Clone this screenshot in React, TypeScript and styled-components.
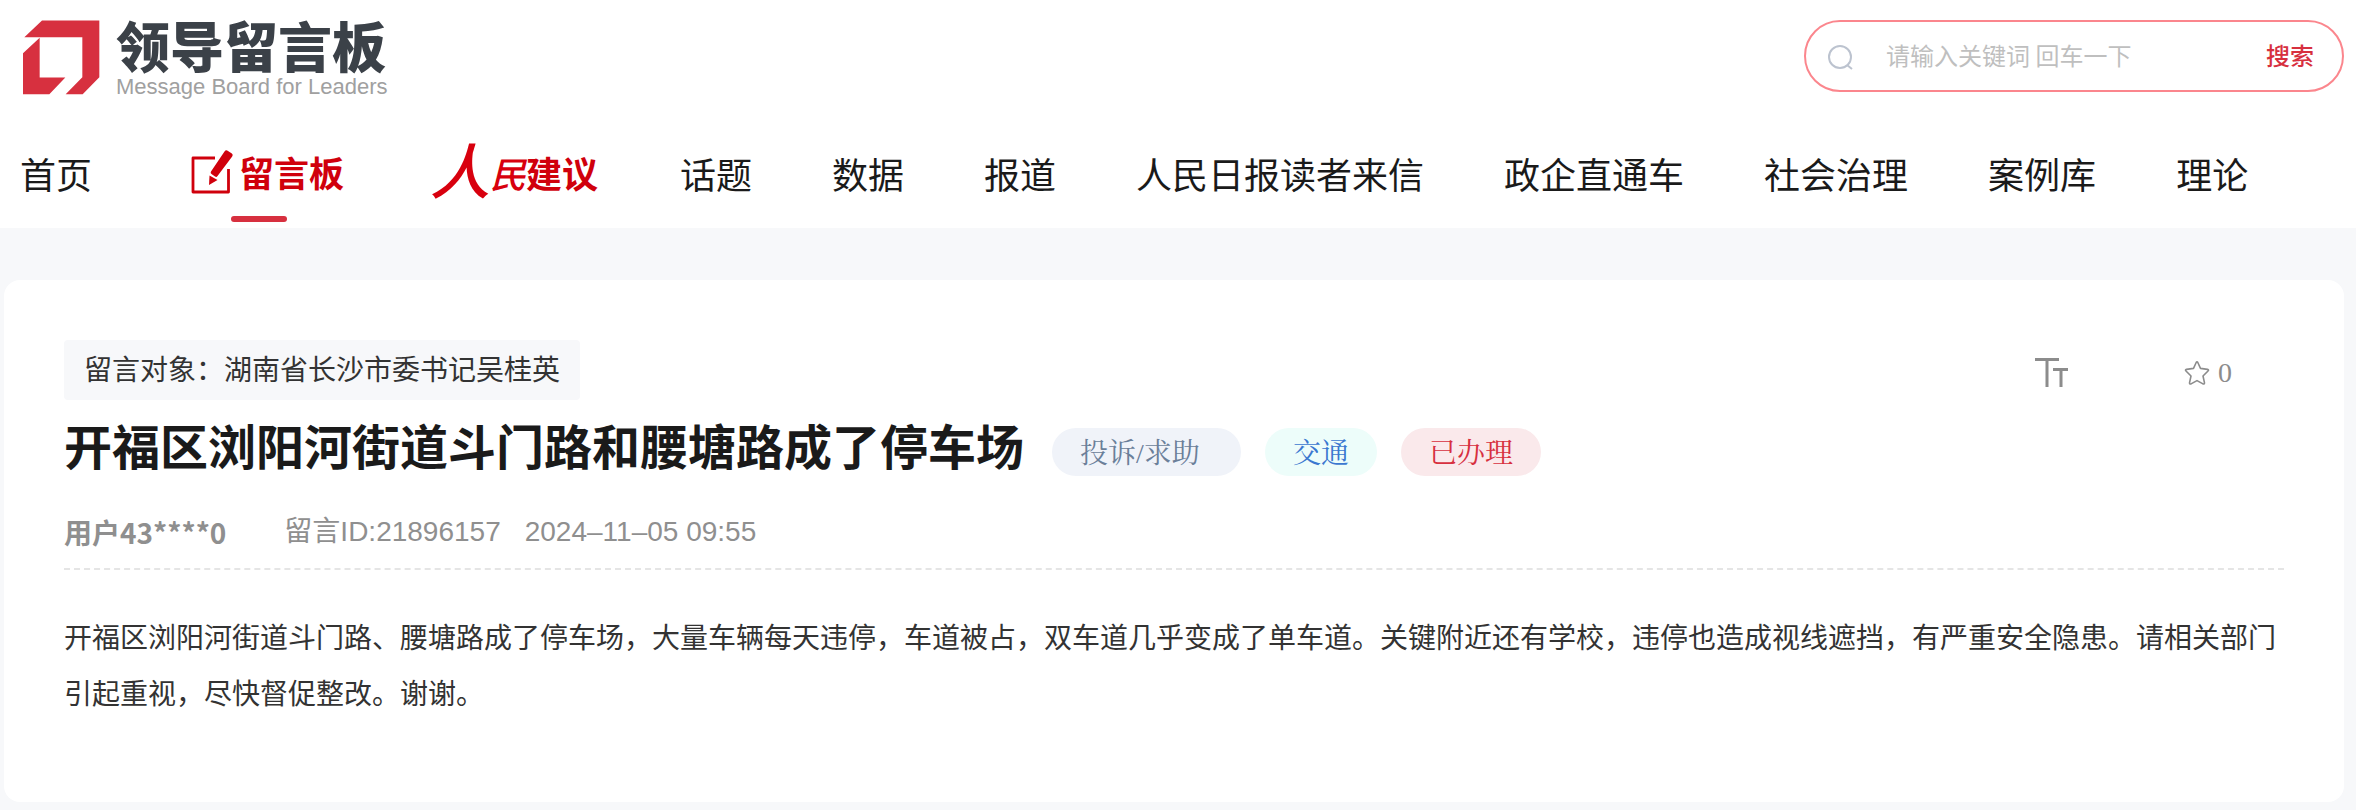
import React from "react";
import styled, { createGlobalStyle, css } from "styled-components";

const sans = `"Noto Sans CJK SC", "Liberation Sans", sans-serif`;
const latinSans = `"Liberation Sans", "Noto Sans CJK SC", sans-serif`;
const serif = `"Liberation Serif", "Noto Serif CJK SC", "Noto Sans CJK SC", serif`;

const GlobalStyle = createGlobalStyle`
  *, *::before, *::after { box-sizing: border-box; }
  body {
    margin: 0;
    background: #f7f8fa;
    color: #1a1a1a;
    font-family: ${sans};
  }
  button, input { font-family: inherit; }
`;

const Header = styled.header`
  background: #fff;
  padding: 20px 12px 0 20px;
`;

const TopBar = styled.div`
  display: flex;
  align-items: flex-start;
  justify-content: space-between;
  height: 102px;
`;

const Logo = styled.a`
  display: flex;
  gap: 16px;
  padding-left: 3px;
  text-decoration: none;
  white-space: nowrap;
`;

const LogoWords = styled.span`
  display: flex;
  flex-direction: column;
  gap: 4px;
`;

const LogoName = styled.span`
  font-size: 54px;
  font-weight: 900;
  line-height: 50px;
  color: #3b4148;
`;

const LogoSub = styled.span`
  font-family: ${latinSans};
  font-size: 22px;
  line-height: 26px;
  color: #a0a0a0;
`;

const Search = styled.form`
  display: flex;
  align-items: center;
  width: 540px;
  height: 72px;
  padding: 0 28px 0 20px;
  border: 2px solid #fb868d;
  border-radius: 36px;
  background: #fff;
`;

const SearchInput = styled.input`
  flex: 1;
  min-width: 0;
  margin-left: 32px;
  padding: 0 0 2px;
  border: 0;
  outline: 0;
  background: transparent;
  font-size: 24px;
  line-height: 36px;
  color: #333;
  &::placeholder {
    color: #bfbfbf;
    opacity: 1;
  }
`;

const SearchButton = styled.button`
  padding: 0 0 2px;
  border: 0;
  background: none;
  font-size: 24px;
  font-weight: 500;
  line-height: 36px;
  color: #d7303f;
  cursor: pointer;
`;

const Nav = styled.nav`
  display: flex;
  gap: 80px;
  height: 106px;
`;

const NavLink = styled.a<{ $art?: boolean; $active?: boolean }>`
  position: relative;
  display: flex;
  align-items: center;
  justify-content: center;
  flex: none;
  padding-bottom: 4px;
  font-size: 36px;
  line-height: 54px;
  color: #1a1a1a;
  text-decoration: none;
  white-space: nowrap;
  ${(p) =>
    p.$art &&
    css`
      width: 174px;
      padding-right: 2px;
      padding-bottom: 6px;
      justify-content: flex-end;
      font-weight: 700;
      color: #d0000c;
    `}
  ${(p) =>
    p.$active &&
    css`
      &::after {
        content: "";
        position: absolute;
        bottom: 6px;
        left: 50%;
        width: 56px;
        height: 6px;
        margin-left: -28px;
        border-radius: 3px;
        background: #d7303f;
      }
    `}
`;

const BoardWord = styled.span`
  padding-left: 4px;
  font-size: 35px;
`;

const Brush = styled.span<{ $large?: boolean }>`
  padding-bottom: ${(p) => (p.$large ? "8px" : "0")};
  font-size: ${(p) => (p.$large ? "60px" : "36px")};
  font-style: italic;
  font-weight: 500;
  color: #d8000e;
`;

const Card = styled.main`
  margin: 52px 12px 8px 4px;
  padding: 60px 60px 80px;
  border-radius: 16px;
  background: #fff;
`;

const CardTop = styled.div`
  display: flex;
  align-items: center;
  justify-content: space-between;
`;

const Target = styled.div`
  padding: 8px 20px 12px;
  border-radius: 4px;
  background: #f7f8fa;
  font-size: 28px;
  line-height: 40px;
  color: #333;
`;

const Tools = styled.div`
  display: flex;
  align-items: center;
  gap: 115px;
  padding-right: 52px;
`;

const ToolButton = styled.button`
  display: flex;
  align-items: center;
  gap: 8px;
  padding: 6px 0 0;
  border: 0;
  background: none;
  font-family: ${serif};
  font-size: 28px;
  line-height: 32px;
  color: #8c8c8c;
  cursor: pointer;
`;

const TitleRow = styled.div`
  display: flex;
  align-items: flex-end;
  margin-top: 10px;
`;

const Title = styled.h1`
  margin: 0 28px 0 0;
  padding-bottom: 2px;
  font-size: 48px;
  font-weight: 700;
  line-height: 68px;
`;

const Tags = styled.div`
  display: flex;
  gap: 24px;
  padding-bottom: 4px;
`;

const tones = {
  slate: { bg: "#f0f3f9", fg: "#6b7f99" },
  mint: { bg: "#edfdfa", fg: "#3b78d0" },
  rose: { bg: "#fae9eb", fg: "#d7303f" },
};

const Tag = styled.span<{ $tone: keyof typeof tones }>`
  height: 48px;
  min-width: ${(p) => (p.$tone === "slate" ? "189px" : "0")};
  padding: 0 28px;
  border-radius: 24px;
  background: ${(p) => tones[p.$tone].bg};
  color: ${(p) => tones[p.$tone].fg};
  font-family: ${serif};
  font-size: 28px;
  line-height: 52px;
  white-space: nowrap;
`;

const Meta = styled.div`
  display: flex;
  margin-top: 32px;
  padding-bottom: 16px;
  border-bottom: 2px dashed #e5e5e5;
  font-family: ${latinSans};
  font-size: 28px;
  line-height: 40px;
  color: #8f8f8f;
`;

const User = styled.strong`
  margin-right: 58px;
  font-family: ${sans};
`;

const MessageId = styled.span`
  margin-right: 24px;
`;

const Content = styled.p`
  margin: 38px 0 2px;
  font-size: 28px;
  line-height: 56px;
  color: #333;
`;

const LogoMark = () => (
  <svg width="77" height="75" viewBox="68 61 231 224" fill="#d7303f" aria-hidden="true">
    <path d="M72 112 125 62H297V232L247 283H196L246 232V112Z" />
    <path d="M68 160 118 114V233H195L147 283H68Z" />
  </svg>
);

const SearchIcon = () => (
  <svg width="28" height="28" viewBox="0 0 28 28" fill="none" stroke="#bcc3cf" strokeWidth="2" aria-hidden="true">
    <circle cx="14" cy="15" r="11" />
    <path d="M21 23l5 4" />
  </svg>
);

const BoardIcon = () => (
  <svg width="44" height="46" viewBox="0 0 44 46" aria-hidden="true">
    <path d="M24 9H2V43H37.500V20" fill="none" stroke="#d0000c" strokeWidth="2.800" strokeLinejoin="round" />
    <path d="M33.500 2.500Q35 .5 37 2L40.500 4.300Q42.500 5.700 41 7.700L26.500 27Q25.500 28.500 24 27.500L20.500 25Q19 24 20 22.500Z" fill="#d0000c" />
    <path d="M18.500 26.500 26.500 31 18 36Z" fill="#d0000c" />
  </svg>
);

const TextSizeIcon = () => (
  <svg width="34" height="30" viewBox="0 0 34 30" fill="none" stroke="#8c8c8c" strokeWidth="3" aria-hidden="true">
    <path d="M0 1.500H24M12 1.500V29M18 11.500H33M26 11.500V29" />
  </svg>
);

const StarIcon = () => (
  <svg width="26" height="26" viewBox="0 0 26 26" fill="none" stroke="#8c8c8c" strokeWidth="1.600" strokeLinejoin="round" aria-hidden="true">
    <path d="M12.200 2.500Q13 1 13.800 2.500L16.500 8.400 23.500 9.400Q25.200 9.800 24 11L19 16 20.500 22.800Q20.600 24.500 19 23.900L13 20.600 7 23.900Q5.400 24.500 5.500 22.800L7 16 2 11Q.8 9.800 2.500 9.400L9.500 8.400Z" />
  </svg>
);

const links = ["话题", "数据", "报道", "人民日报读者来信", "政企直通车", "社会治理", "案例库", "理论"];

export default function App() {
  return (
    <>
      <GlobalStyle />
      <Header>
        <TopBar>
          <Logo href="#">
            <LogoMark />
            <LogoWords>
              <LogoName>领导留言板</LogoName>
              <LogoSub>Message Board for Leaders</LogoSub>
            </LogoWords>
          </Logo>
          <Search role="search" onSubmit={(e) => e.preventDefault()}>
            <SearchIcon />
            <SearchInput type="text" aria-label="搜索关键词" placeholder="请输入关键词 回车一下" />
            <SearchButton type="submit">搜索</SearchButton>
          </Search>
        </TopBar>
        <Nav>
          <NavLink href="#">首页</NavLink>
          <NavLink href="#" $art $active>
            <BoardIcon />
            <BoardWord>留言板</BoardWord>
          </NavLink>
          <NavLink href="#" $art>
            <Brush $large>人</Brush>
            <Brush>民</Brush>
            建议
          </NavLink>
          {links.map((label) => (
            <NavLink href="#" key={label}>
              {label}
            </NavLink>
          ))}
        </Nav>
      </Header>
      <Card>
        <CardTop>
          <Target>留言对象：湖南省长沙市委书记吴桂英</Target>
          <Tools>
            <ToolButton type="button" aria-label="字号">
              <TextSizeIcon />
            </ToolButton>
            <ToolButton type="button" aria-label="收藏">
              <StarIcon />0
            </ToolButton>
          </Tools>
        </CardTop>
        <TitleRow>
          <Title>开福区浏阳河街道斗门路和腰塘路成了停车场</Title>
          <Tags>
            <Tag $tone="slate">投诉/求助</Tag>
            <Tag $tone="mint">交通</Tag>
            <Tag $tone="rose">已办理</Tag>
          </Tags>
        </TitleRow>
        <Meta>
          <User>用户43****0</User>
          <MessageId>留言ID:21896157</MessageId>
          <time dateTime="2024-11-05T09:55">2024–11–05 09:55</time>
        </Meta>
        <Content>
          开福区浏阳河街道斗门路、腰塘路成了停车场，大量车辆每天违停，车道被占，双车道几乎变成了单车道。关键附近还有学校，违停也造成视线遮挡，有严重安全隐患。请相关部门引起重视，尽快督促整改。谢谢。
        </Content>
      </Card>
    </>
  );
}
